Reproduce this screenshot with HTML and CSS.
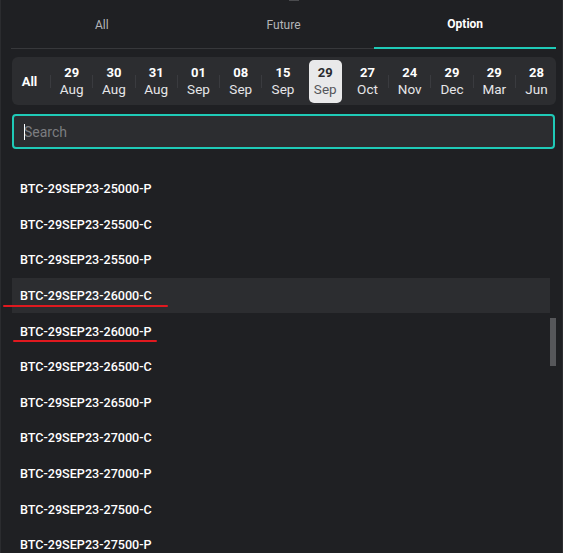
FILE: index.html
```html
<!DOCTYPE html>
<html>
<head>
<meta charset="utf-8">
<link rel="stylesheet" href="styles.css">
</head>
<body>
<div class="panel">
  <div class="top-handle"></div>
  <div class="tabs">
    <div class="tab">All</div>
    <div class="tab">Future</div>
    <div class="tab active">Option</div>
  </div>
  <div class="dates">
    <div class="date all">All</div>
    <div class="sep"></div>
    <div class="date"><b>29</b><span>Aug</span></div>
    <div class="sep"></div>
    <div class="date"><b>30</b><span>Aug</span></div>
    <div class="sep"></div>
    <div class="date"><b>31</b><span>Aug</span></div>
    <div class="sep"></div>
    <div class="date"><b>01</b><span>Sep</span></div>
    <div class="sep"></div>
    <div class="date"><b>08</b><span>Sep</span></div>
    <div class="sep"></div>
    <div class="date"><b>15</b><span>Sep</span></div>
    <div class="sep hidden"></div>
    <div class="date selected"><b>29</b><span>Sep</span></div>
    <div class="sep hidden"></div>
    <div class="date"><b>27</b><span>Oct</span></div>
    <div class="sep"></div>
    <div class="date"><b>24</b><span>Nov</span></div>
    <div class="sep"></div>
    <div class="date"><b>29</b><span>Dec</span></div>
    <div class="sep"></div>
    <div class="date"><b>29</b><span>Mar</span></div>
    <div class="sep"></div>
    <div class="date"><b>28</b><span>Jun</span></div>
  </div>
  <div class="search">
    <span class="caret"></span>
    <input class="search-input" type="text" placeholder="Search">
  </div>
  <div class="list-wrap">
    <div class="list">
      <div class="row">BTC-29SEP23-25000-P</div>
      <div class="row">BTC-29SEP23-25500-C</div>
      <div class="row">BTC-29SEP23-25500-P</div>
      <div class="row hover">BTC-29SEP23-26000-C</div>
      <div class="row">BTC-29SEP23-26000-P</div>
      <div class="row">BTC-29SEP23-26500-C</div>
      <div class="row">BTC-29SEP23-26500-P</div>
      <div class="row">BTC-29SEP23-27000-C</div>
      <div class="row">BTC-29SEP23-27000-P</div>
      <div class="row">BTC-29SEP23-27500-C</div>
      <div class="row">BTC-29SEP23-27500-P</div>
    </div>
    <div class="scrollbar"></div>
  </div>
  <div class="mark mark-1"></div>
  <div class="mark mark-2"></div>
</div>
</body>
</html>
```
FILE: styles.css
```css
* { box-sizing: border-box; }
html, body {
  margin: 0;
  padding: 0;
  background: #1f2023;
  overflow: hidden;
}
body {
  font-family: Roboto, "Liberation Sans", Arial, sans-serif;
  color: #fff;
}
.panel {
  position: relative;
  width: 563px;
  height: 553px;
  background: #1f2023;
  border-left: 1px solid #2b2c2f;
  border-right: 1px solid #2b2c2f;
  padding: 0 6px 0 10px;
  overflow: hidden;
}
.top-handle {
  position: absolute;
  left: 288px;
  top: 0;
  width: 10px;
  height: 1px;
  background: #4a4b4e;
}
.tabs {
  display: flex;
  height: 49px;
  border-bottom: 1px solid #37383b;
  margin-bottom: 8px;
}
.tab {
  flex: 1;
  display: flex;
  align-items: center;
  justify-content: center;
  font-size: 12px;
  color: #b4b5b8;
  padding-top: 1px;
}
.tab.active {
  color: #fff;
  font-weight: 700;
  border-bottom: 2px solid #1fcab7;
  margin-bottom: -1px;
  padding-top: 0;
}
.dates {
  display: flex;
  align-items: center;
  justify-content: space-between;
  height: 48px;
  margin-left: 1px;
  background: #2c2d30;
  border-radius: 6px;
  padding: 1px 3px 0 1px;
}
.date {
  width: 33px;
  height: 43px;
  display: flex;
  flex-direction: column;
  align-items: center;
  justify-content: center;
  border-radius: 5px;
  color: #e6e6e8;
}
.date b {
  font-size: 13px;
  font-weight: 700;
  line-height: 16px;
  color: #fff;
}
.date span {
  font-size: 13.5px;
  line-height: 17px;
}
.date.all {
  font-size: 13px;
  font-weight: 700;
  color: #fff;
}
.date.selected {
  background: #e9e9ea;
}
.date.selected b { color: #2a2b2e; }
.date.selected span { color: #55565a; }
.sep {
  width: 1px;
  height: 13px;
  background: #3a3b3f;
}
.sep.hidden { background: transparent; }
.search {
  position: relative;
  margin: 9px 1px 0 1px;
  height: 35px;
  border: 2px solid #1fcab7;
  border-radius: 4px;
  background: #2c2d30;
}
.search-input {
  display: block;
  width: 100%;
  height: 100%;
  border: 0;
  outline: none;
  background: transparent;
  padding: 0 0 0 10px;
  font-family: Roboto, "Liberation Sans", Arial, sans-serif;
  font-size: 14px;
  color: #fff;
}
.search-input::placeholder { color: #7c7d80; }
.caret {
  position: absolute;
  left: 10px;
  top: 8px;
  width: 1px;
  height: 16px;
  background: #fff;
}
.list-wrap {
  display: flex;
  margin-top: 22px;
  margin-left: 1px;
}
.list {
  flex: 1;
}
.row {
  height: 35.6px;
  display: flex;
  align-items: center;
  padding-left: 8px;
  font-size: 12.6px;
  font-weight: 500;
  color: #fff;
}
.row.hover {
  background: #2c2d30;
}
.scrollbar {
  width: 6px;
  height: 48px;
  margin-top: 147px;
  background: #56575a;
}
.mark {
  position: absolute;
  height: 2px;
  background: #e0191f;
  border-radius: 1px;
}
.mark-1 { left: 2px; width: 165px; top: 305px; }
.mark-2 { left: 12px; width: 144px; top: 340px; }
```
